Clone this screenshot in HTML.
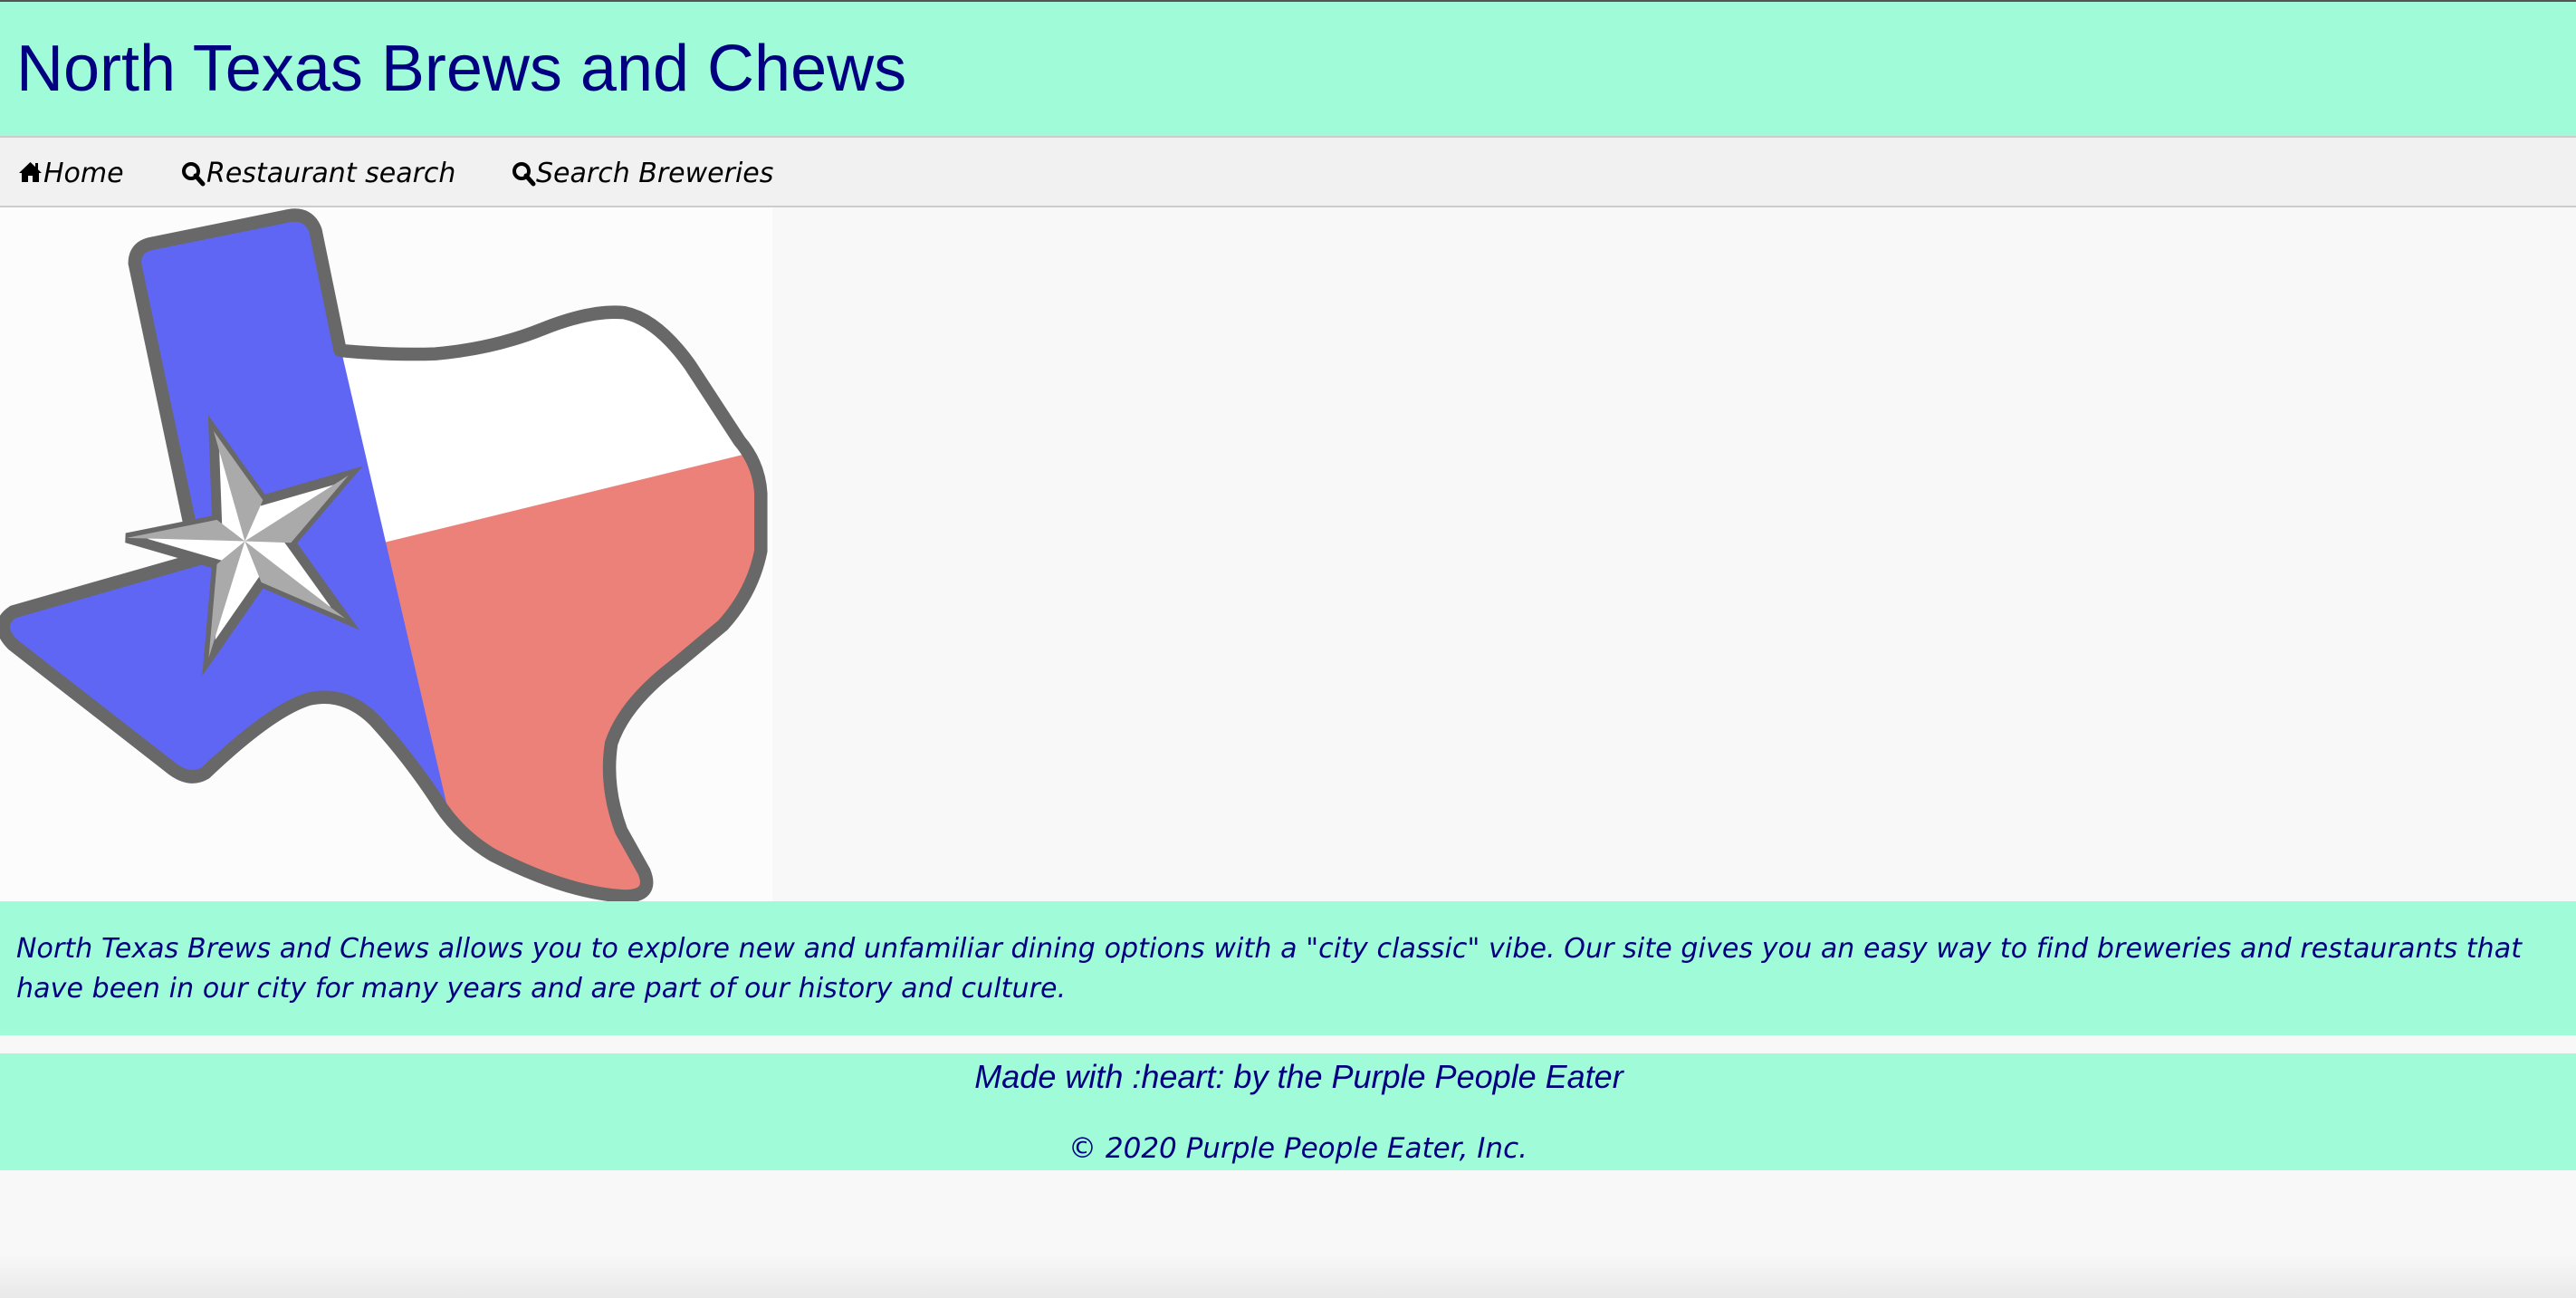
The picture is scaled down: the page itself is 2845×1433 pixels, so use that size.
<!DOCTYPE html>
<html><head><meta charset="utf-8"><style>
*{margin:0;padding:0;box-sizing:border-box}
body{width:2845px;height:1433px;background:#f8f8f8;position:relative;overflow:hidden;font-family:"DejaVu Sans",Verdana,sans-serif}
.hdr{position:absolute;left:0;top:0;width:2845px;height:150px;background:#a0fcd8;border-top:2px solid #555}
.hdr h1{position:absolute;left:18px;top:33px;font:72px "Liberation Sans",Arial,sans-serif;color:#000080;white-space:nowrap}
.nav{position:absolute;left:0;top:150px;width:2845px;height:79px;background:#f1f1f1;border-top:2px solid #ccc;border-bottom:2px solid #ccc}
.nav span{position:absolute;top:22px;font-style:italic;font-size:30px;color:#000;white-space:nowrap}
.nav svg{position:absolute;top:26px}
.img{position:absolute;left:0;top:229px;width:853px;height:766px;background:#fcfcfc}
.about{position:absolute;left:0;top:995px;width:2845px;height:148px;background:#a0fcd8}
.about p{position:absolute;left:18px;top:31px;width:2800px;font-style:italic;font-size:30px;line-height:44px;color:#000080;letter-spacing:0.1px}
.foot{position:absolute;left:0;top:1163px;width:2845px;height:129px;background:#a0fcd8;text-align:center;color:#000080}
.f1{position:absolute;left:0;width:100%;top:5px;padding-left:24px;font:italic 36px "Liberation Sans",Arial,sans-serif}
.f2{position:absolute;left:0;width:100%;top:87px;padding-left:22px;font-style:italic;font-size:31px}
.shadow{position:absolute;left:0;top:1385px;width:2845px;height:48px;background:linear-gradient(#f8f8f8,#e9e9e9)}
</style></head><body>
<div class="hdr"><h1>North Texas Brews and Chews</h1></div>
<div class="nav">
<svg style="left:20px" width="27" height="24" viewBox="0 0 27 24"><path d="M13.5 1 L1 13 L4 13 L4 23 L11 23 L11 16 L16 16 L16 23 L23 23 L23 13 L26 13 Z" fill="#000"/><rect x="19" y="2" width="3" height="7" fill="#000"/></svg>
<span style="left:48px">Home</span>
<svg style="left:200px" width="28" height="28" viewBox="0 0 28 28"><circle cx="11" cy="11" r="8" fill="none" stroke="#000" stroke-width="4"/><path d="M16 16 L24 25" stroke="#000" stroke-width="5" stroke-linecap="round"/></svg>
<span style="left:228px">Restaurant search</span>
<svg style="left:565px" width="28" height="28" viewBox="0 0 28 28"><circle cx="11" cy="11" r="8" fill="none" stroke="#000" stroke-width="4"/><path d="M16 16 L24 25" stroke="#000" stroke-width="5" stroke-linecap="round"/></svg>
<span style="left:592px">Search Breweries</span>
</div>
<div class="img">
<svg width="853" height="766" viewBox="0 126 470 422">
<defs><clipPath id="tx"><path id="tp" d="M82,160 Q82,150 92,148 L176,131 Q188,129 192,140 L207,213 Q240,216 265,215 Q300,212 330,200 Q360,188 380,190 Q400,194 420,222 L450,268 Q462,282 463,300 L463,335 Q458,360 440,380 L410,405 Q380,428 372,452 Q368,478 378,505 L392,530 Q398,545 380,545 Q345,543 300,520 Q280,508 268,490 Q250,462 228,438 Q210,420 188,425 Q165,432 125,470 Q115,476 103,466 L8,392 Q-4,380 8,372 L120,340 Z"/></clipPath></defs>
<g clip-path="url(#tx)">
<rect x="0" y="120" width="470" height="430" fill="#fff"/>
<polygon points="233,330 470,272 470,550 285,550" fill="#ec817a"/>
<polygon points="0,120 186,120 286,550 0,550" fill="#6066f4"/>
</g>
<use href="#tp" fill="none" stroke="#686868" stroke-width="8" stroke-linejoin="round"/>
<g stroke-linejoin="miter">
<polygon points="130,262 160,304 212,289 177,330 210,376 159,354 127,400 132,343 77,327 132,316" fill="#fff" stroke="#686868" stroke-width="6"/>
<polygon points="149,329 130,262 160,304" fill="#aaa"/>
<polygon points="149,329 212,289 177,330" fill="#aaa"/>
<polygon points="149,329 210,376 159,354" fill="#aaa"/>
<polygon points="149,329 127,400 132,343" fill="#aaa"/>
<polygon points="149,329 77,327 132,316" fill="#aaa"/>
</g>
</svg>
</div>
<div class="about"><p>North Texas Brews and Chews allows you to explore new and unfamiliar dining options with a "city classic" vibe. Our site gives you an easy way to find breweries and restaurants that have been in our city for many years and are part of our history and culture.</p></div>
<div class="foot"><div class="f1">Made with :heart: by the Purple People Eater</div><div class="f2">© 2020 Purple People Eater, Inc.</div></div>
<div class="shadow"></div>
</body></html>
